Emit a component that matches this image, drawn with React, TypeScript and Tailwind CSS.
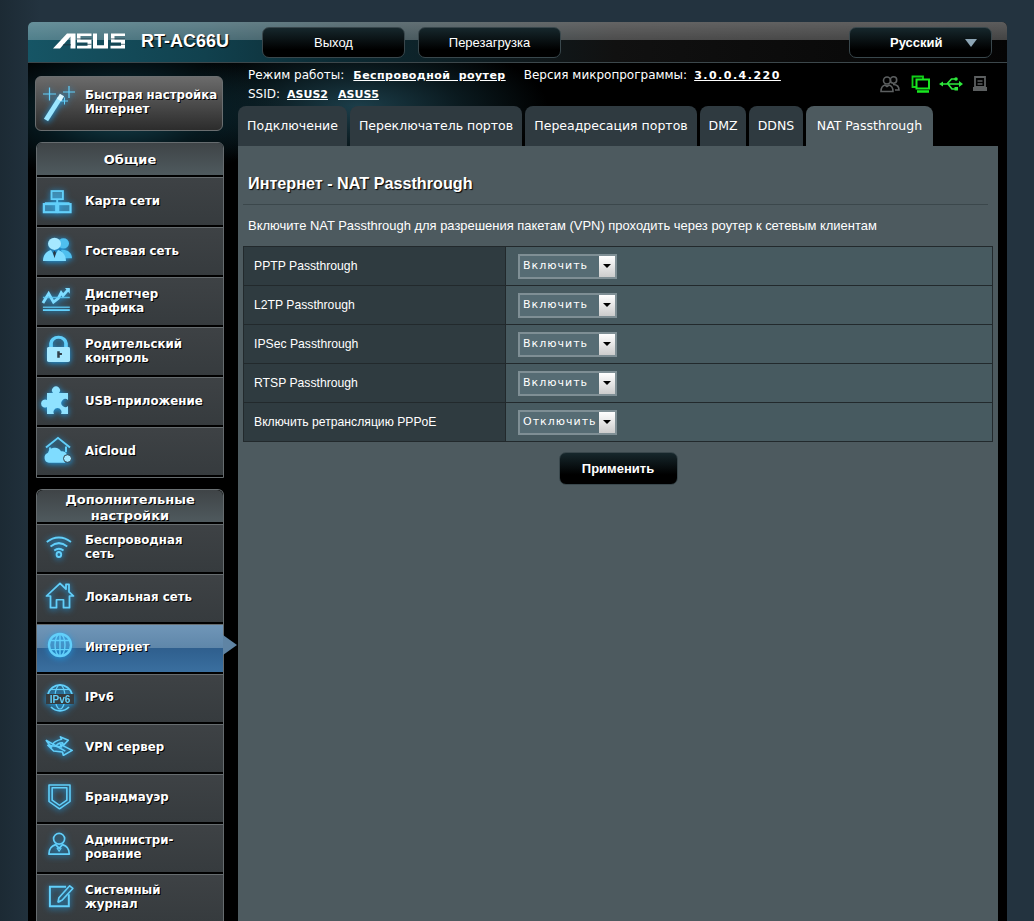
import React from "react";

const glow = "text-[#62cffa] drop-shadow-[0_1px_3px_#1aa0ee]";

function Svg({ children, t }: { children: React.ReactNode; t: string }) {
  return (
    <svg viewBox="0 0 32 32" className={`w-[32px] h-[32px] shrink-0 overflow-visible ${glow}`} fill="none" stroke="currentColor" strokeWidth="2">
      <g transform={t}>{children}</g>
    </svg>
  );
}

const NetworkIcon = () => (
  <Svg t="translate(-2 1) scale(.95 .9)">
    <rect x="10" y="4.500" width="12" height="9" strokeWidth="2" fill="#62cffa" fillOpacity=".35" />
    <path d="M16 13.500v4M3 18h26" />
    <rect x="2" y="19" width="13" height="9" strokeWidth="2.400" fill="#62cffa" fillOpacity=".25" />
    <rect x="17" y="19" width="13" height="9" strokeWidth="2.400" fill="#62cffa" fillOpacity=".25" />
  </Svg>
);
const GuestIcon = () => (
  <Svg t="translate(-2 -1) scale(1 .93)">
    <g fill="#7fdcff" stroke="none">
      <circle cx="21.500" cy="9" r="5.500" fill="#4fbfee" />
      <path d="M19 16c6-1 11 3 11 9h-8z" fill="#4fbfee" />
      <circle cx="12.500" cy="9.500" r="6.500" fill="#a6e8ff" />
      <path d="M1 28c0-7 4-11 8-12l3.500 7 3.500-7c4 1 8 5 8 12z" />
    </g>
    <path d="M12.500 17l-1.500 2 1.500 6 1.500-6z" fill="#2a3a45" stroke="none" />
  </Svg>
);
const TrafficIcon = () => (
  <Svg t="translate(-3 -2.700) scale(.96 .94)">
    <path d="M2 21l6-10 5 9 5-4 3-6 2 3 6-7" strokeWidth="3" stroke="#7fdcff" />
    <path d="M25 5h5v6z" fill="#7fdcff" stroke="none" />
    <path d="M2 15h28M2 25.500h28" strokeWidth="1.600" strokeOpacity=".8" />
    <path d="M2 28.500h28" strokeWidth="2" />
  </Svg>
);
const LockIcon = () => (
  <Svg t="translate(-3.900 -1) scale(1.150 .93)">
    <path d="M9.500 14V9a6.500 6.500 0 0 1 13 0v5" strokeWidth="3.200" />
    <rect x="6" y="13" width="20" height="16" rx="1.500" fill="#a6e8ff" stroke="none" />
    <path d="M16 17.500v7M16 20.500h3" stroke="#32404a" strokeWidth="2.200" />
  </Svg>
);
const PuzzleIcon = () => (
  <Svg t="translate(-4 -2)">
    <path
      d="M7 9h6a4 4 0 1 1 6 0h9v7a4 4 0 1 0 0 6v8h-7a4 4 0 1 0-7 0H7v-7a4 4 0 1 1 0-7z"
      fill="#8fe2ff"
      stroke="none"
    />
  </Svg>
);
const CloudIcon = () => (
  <Svg t="translate(-2 -1) scale(1 .96)">
    <path d="M4 13L16 3l12 10" strokeWidth="2" />
    <path d="M8 13v4M24 12v6" strokeWidth="2" />
    <path d="M7 29a5.500 5.500 0 0 1-1-10.500 7 7 0 0 1 13-1.500 5 5 0 0 1 6 4l-2 8z" fill="#7fdcff" stroke="none" />
    <circle cx="25.500" cy="24.500" r="4" fill="#a6e8ff" stroke="#32404a" strokeWidth="1" />
  </Svg>
);
const WifiIcon = () => (
  <Svg t="translate(0 -4) scale(.93 1)">
    <path d="M3 13c8-6 18-6 26 0" />
    <path d="M7 17.500c6-4.500 12-4.500 18 0" />
    <path d="M11 21.500c3.500-2.500 6.500-2.500 10 0" />
    <circle cx="16" cy="25.500" r="2.500" />
  </Svg>
);
const HomeIcon = () => (
  <Svg t="translate(0 -2.800) scale(1 .93)">
    <path d="M2.500 17L16 3.500l6 6V4.500h3v8l4.500 4.500h-4V29.500h-6V21h-7v8.500h-6V17z" strokeWidth="1.800" strokeLinejoin="round" />
  </Svg>
);
const GlobeIcon = () => (
  <Svg t="translate(0 -3)">
    <circle cx="16" cy="15" r="11" strokeWidth="2.400" />
    <ellipse cx="16" cy="15" rx="5" ry="11" strokeWidth="1.400" />
    <path d="M16 4v22M5 10.500h22M5 19.500h22" strokeWidth="1.400" />
  </Svg>
);
const Ipv6Icon = () => (
  <Svg t="translate(0 -2)">
    <path d="M4 13a12.500 12.500 0 0 1 24 0M7 26a12.500 12.500 0 0 0 18 0" strokeWidth="1.800" />
    <ellipse cx="16" cy="16" rx="5" ry="12" strokeWidth="1.200" />
    <path d="M6 8.500h20" strokeWidth="1.200" />
    <rect x="2" y="13" width="28" height="10" fill="#363c3f" stroke="none" />
    <text x="16" y="22" textAnchor="middle" fontSize="10" fontFamily="Liberation Sans, sans-serif" fontWeight="700" fill="currentColor" stroke="none">
      IPv6
    </text>
  </Svg>
);
const VpnIcon = () => (
  <Svg t="translate(0 -1.200) scale(.97 .84)">
    <path d="M2 10l20 13M2 10l6 9" strokeWidth="1.800" />
    <path d="M9 15c1-3 5-5 9-6l-1-3 8 4-5 6-1-3c-3 0-6 2-7 5" strokeWidth="1.800" strokeLinejoin="round" />
    <path d="M4 16l14 2-1-3 12 7-9 6-1-4-9-1z" strokeWidth="1.800" strokeLinejoin="round" />
  </Svg>
);
const ShieldIcon = () => (
  <Svg t="translate(-1.300 -.8) scale(1.050 .92)">
    <path d="M6 3h20v18l-10 8-10-8z" strokeWidth="1.500" strokeLinejoin="round" />
    <path d="M9 6h14v13.500l-7 5.500-7-5.500z" strokeWidth="1.500" strokeLinejoin="round" />
  </Svg>
);
const AdminIcon = () => (
  <Svg t="translate(1.500 -2.500) scale(.85 .83)">
    <circle cx="16" cy="10" r="6.500" strokeWidth="2" />
    <path d="M4 28.500c0-7 3-10 8-11.500l4 4.500 4-4.500c5 1.500 8 4.500 8 11.500z" strokeWidth="2" strokeLinejoin="round" />
    <path d="M13.500 21l2.500 4 2.500-4" strokeWidth="1.400" />
  </Svg>
);
const LogIcon = () => (
  <Svg t="translate(2.300 -1.400) scale(.9 .85)">
    <path d="M25 15v14H4V6h18" strokeWidth="2.200" />
    <path d="M13 24l1-5L26 5l3.500 3-12 14z" strokeWidth="1.800" strokeLinejoin="round" />
    <path d="M13 24l3-1" strokeWidth="1.800" />
  </Svg>
);
const WandIcon = () => (
  <svg viewBox="0 0 36 40" className={`w-[36px] h-[40px] ${glow}`} fill="none" stroke="currentColor">
    <path d="M2 10h13M8.500 3.500v13" strokeWidth="1.200" />
    <path d="M22 8h12M28 2v12" strokeWidth="1.200" />
    <path d="M20 17h7M23.500 13.500v7" strokeWidth="1" />
    <path d="M5 36L19 14" strokeWidth="5" stroke="#9be6ff" />
    <path d="M18 16l3-5" strokeWidth="5" stroke="#d8f6ff" />
  </svg>
);

const LogoAsus = () => (
  <svg viewBox="0 0 72 16" className="w-[72px] h-[16px]" fill="#fff">
    <path d="M0 15.500L14 .5h8.500V15.500h-5V3.500L7 15.500z" />
    <path d="M11 11h6.500v1.500H9.500z" fill="#1c3d49" />
    <path d="M24 .5h14.500v2.600H27.500V6.500h11v9H24v-2.800h10.500V9.500H24z" />
    <path d="M24 5.200h14.500v1.200H24zM24 10.800h14.500V12H24z" fill="#1c3d49" opacity=".55" />
    <path d="M40 .5h4v11.800h7V.5h4v15H40z" />
    <path d="M58 .5h14v2.600H61.500V6.500H72v9H57.500v-2.800H68V9.500H58z" />
    <path d="M58 5.200h14v1.200H58zM58 10.800h14V12H58z" fill="#1c3d49" opacity=".55" />
  </svg>
);

const GuestStatus = () => (
  <svg viewBox="0 0 20 18" className="w-[20px] h-[18px]" fill="none" stroke="#5c5f60" strokeWidth="1.600">
    <circle cx="13.500" cy="5" r="3.200" />
    <circle cx="7" cy="5.500" r="3.500" />
    <path d="M1 16.500c0-4 2-6 4-6.500l2 1.500 2-1.500c2 .5 4 2.500 4 6.500z" />
    <path d="M13 9.500c3 0 6 1.500 6 5.500h-4" />
  </svg>
);
const WanStatus = () => (
  <svg viewBox="0 0 20 18" className="w-[20px] h-[18px]" fill="none" stroke="#11d018" strokeWidth="1.800">
    <path d="M5 12H1.500V1.500H12V4" />
    <rect x="5.500" y="4.500" width="12.500" height="9" strokeWidth="2" stroke="#18e820" />
    <path d="M6 16.500h12" strokeWidth="2.400" stroke="#18e820" />
  </svg>
);
const UsbStatus = () => (
  <svg viewBox="0 0 24 16" className="w-[24px] h-[16px]" fill="none" stroke="#2ee83c" strokeWidth="1.700">
    <path d="M2 8h19M8 8l4.500-5H16M9 8l4 5h3" />
    <path d="M0 8l4-2.500v5zM24 8l-4-3v6z" fill="#2ee83c" stroke="none" />
    <circle cx="17" cy="3" r="1.800" fill="#2ee83c" stroke="none" />
    <rect x="15.500" y="11" width="3.500" height="3.500" fill="#2ee83c" stroke="none" />
  </svg>
);
const PrinterStatus = () => (
  <svg viewBox="0 0 16 16" className="w-[16px] h-[16px]" fill="none" stroke="#5c5f60" strokeWidth="1.800">
    <path d="M3 1h10v10H3z" />
    <path d="M5.500 5h5M5.500 8h5" strokeWidth="1.300" />
    <path d="M1 11h14v4H1z" fill="#5c5f60" stroke="none" />
  </svg>
);

const general: [string[], React.ReactNode][] = [
  [["Карта сети"], <NetworkIcon />],
  [["Гостевая сеть"], <GuestIcon />],
  [["Диспетчер", "трафика"], <TrafficIcon />],
  [["Родительский", "контроль"], <LockIcon />],
  [["USB-приложение"], <PuzzleIcon />],
  [["AiCloud"], <CloudIcon />],
];
const advanced: [string[], React.ReactNode, boolean?][] = [
  [["Беспроводная", "сеть"], <WifiIcon />],
  [["Локальная сеть"], <HomeIcon />],
  [["Интернет"], <GlobeIcon />, true],
  [["IPv6"], <Ipv6Icon />],
  [["VPN сервер"], <VpnIcon />],
  [["Брандмауэр"], <ShieldIcon />],
  [["Администри-", "рование"], <AdminIcon />],
  [["Системный", "журнал"], <LogIcon />],
];

const menuFace =
  "[font-family:DejaVu_Sans,sans-serif] font-bold text-white [text-shadow:1px_1px_0_#000]";
const menuText = `${menuFace} text-[11.8px] leading-[14px]`;
const groupTitle = `${menuFace} text-[13px] leading-[16px]`;

function MenuItem({ lines, icon, active, first }: { lines: string[]; icon: React.ReactNode; active?: boolean; first?: boolean }) {
  return (
    <div
      className={`relative h-[50px] shrink-0 flex items-center pl-[7px] border-b-2 border-b-black border-t border-t-[#666c6f] ${
        active
          ? "bg-[linear-gradient(to_bottom,#7096b8_0%,#5f87aa_48%,#2f5f8e_50%,#3a6f9f_100%)]"
          : "bg-[linear-gradient(to_bottom,#3e4245,#363b3e)]"
      }`}
    >
      {icon}
      <div className={`ml-[9px] ${first ? "-mt-[1px]" : "-mt-[3px]"} ${menuText}`}>
        {lines.map((l) => (
          <div key={l}>{l}</div>
        ))}
      </div>
      {active && (
        <div className="absolute left-[186px] top-[10px] w-0 h-0 border-y-[10px] border-y-transparent border-l-[14px] border-l-[#5f84a4]" />
      )}
    </div>
  );
}

function HeaderButton({ label }: { label: string }) {
  return (
    <div className="w-[143px] h-[31px] pt-[1px] rounded-[7px] border border-[#39474c] bg-[linear-gradient(to_bottom,#16272c,#000_75%)] flex items-center justify-center text-white text-[13px] [font-family:Liberation_Sans,sans-serif]">
      {label}
    </div>
  );
}

const tabs: [string, string][] = [
  ["Подключение", "w-[109px]"],
  ["Переключатель портов", "w-[172px]"],
  ["Переадресация портов", "w-[172px]"],
  ["DMZ", "w-[46px]"],
  ["DDNS", "w-[54px]"],
  ["NAT Passthrough", "w-[127px]"],
];
const rows = [
  ["PPTP Passthrough", "Включить"],
  ["L2TP Passthrough", "Включить"],
  ["IPSec Passthrough", "Включить"],
  ["RTSP Passthrough", "Включить"],
  ["Включить ретрансляцию PPPoE", "Отключить"],
];

const valueText = "[font-family:DejaVu_Sans,sans-serif] font-bold text-[11px] underline text-white";

export default function App() {
  return (
    <div className="h-[921px] overflow-hidden pt-[22px] pl-[28px] bg-[linear-gradient(to_right,#1c2a34,#23333f_40px,#23333f)]">
      <div className="w-[979px] h-[899px] rounded-t-[5px] overflow-hidden bg-black bg-[radial-gradient(ellipse_160px_70px_at_95px_90px,#164552_0%,rgba(10,40,50,0.6)_55%,transparent_100%),radial-gradient(ellipse_190px_70px_at_330px_85px,#1c3e4a_0%,rgba(20,50,60,0.5)_55%,transparent_100%)]">
        {/* Top bar */}
        <div className="relative h-[41px] border-b border-b-[#3c474b] flex items-center bg-[linear-gradient(to_bottom,rgba(255,255,255,0.35)_0%,rgba(255,255,255,0.25)_44%,transparent_44%),linear-gradient(to_right,#165565_0%,#11414e_18%,#0c2a33_32%,#111_60%,#050505_100%)]">
          <div className="ml-[25px] w-[72px] flex -mt-[2px]">
            <LogoAsus />
          </div>
          <div className="ml-[16px] w-[105px] -mt-[1px] text-white font-bold text-[18px] [font-family:Liberation_Sans,sans-serif] [text-shadow:1px_1px_1px_#000]">
            RT-AC66U
          </div>
          <div className="ml-[16px]">
            <HeaderButton label="Выход" />
          </div>
          <div className="ml-[13px]">
            <HeaderButton label="Перезагрузка" />
          </div>
          <div className="ml-[288px] relative w-[143px] h-[31px] pt-[1px] rounded-[7px] border border-[#39474c] bg-[linear-gradient(to_bottom,#16272c,#000_75%)] flex items-center pl-[40px] text-white font-bold text-[13px] [font-family:Liberation_Sans,sans-serif]">
            Русский
            <div className="absolute right-[14px] top-[11px] w-0 h-0 border-x-[6px] border-x-transparent border-t-[8px] border-t-[#8da5b5]" />
          </div>
        </div>

        <div className="flex">
          {/* Sidebar */}
          <div className="w-[210px] shrink-0 pl-[7px] pt-[13px]">
            <div className="w-[188px] h-[55px] rounded-[6px] border border-[#6a6e70] bg-[linear-gradient(to_bottom,#6b6b6b,#2c2c2c)] flex items-center pl-[5px]">
              <WandIcon />
              <div className={`ml-[8px] -mt-[4px] ${menuText}`}>
                <div>Быстрая настройка</div>
                <div>Интернет</div>
              </div>
            </div>

            <div className="ml-[1px] mt-[11px] w-[188px] border border-[#666c6f] rounded-t-[6px] overflow-hidden">
              <div className={`h-[34px] pt-[2px] flex items-center justify-center border-b-2 border-b-black bg-[linear-gradient(to_bottom,#3f4447,#4f5a5e)] ${groupTitle}`}>
                Общие
              </div>
              {general.map(([l, i]) => (
                <MenuItem key={l[0]} lines={l} icon={i} first />
              ))}
            </div>

            <div className="ml-[1px] mt-[11px] w-[188px] border-x border-x-[#666c6f] border-t border-t-[#6a7073] rounded-t-[6px]">
              <div className={`h-[34px] rounded-t-[6px] flex flex-col items-center justify-center border-b-2 border-b-black text-center bg-[linear-gradient(to_bottom,#3f4447,#4f5a5e)] ${groupTitle}`}>
                <div className="translate-y-[2px]">Дополнительные</div>
                <div className="translate-y-[2px]">настройки</div>
              </div>
              {advanced.map(([l, i, a]) => (
                <MenuItem key={l[0]} lines={l} icon={i} active={a} />
              ))}
            </div>
          </div>

          {/* Main */}
          <div className="w-[760px] shrink-0">
            <div className="h-[43px] relative pl-[10px] pt-[3px] text-white text-[12px] leading-[19px] [font-family:DejaVu_Sans,sans-serif]">
              <div className="flex items-baseline">
                <span>Режим работы:</span>
                <span className={`${valueText} ml-[9px] tracking-[0.45px] [word-spacing:4px]`}>Беспроводной роутер</span>
                <span className="ml-[18px]">Версия микропрограммы:</span>
                <span className={`${valueText} ml-[7px] tracking-[1.5px]`}>3.0.0.4.220</span>
              </div>
              <div className="flex items-baseline">
                <span>SSID:</span>
                <span className={`${valueText} ml-[7px]`}>ASUS2</span>
                <span className={`${valueText} ml-[10px]`}>ASUS5</span>
              </div>
              <div className="absolute left-[642px] top-[12px] flex items-center">
                <GuestStatus />
                <div className="ml-[11px]"><WanStatus /></div>
                <div className="ml-[8px]"><UsbStatus /></div>
                <div className="ml-[9px]"><PrinterStatus /></div>
              </div>
            </div>

            <div className="flex gap-[3px] h-[40px]">
              {tabs.map(([t, w], i) => (
                <div
                  key={t}
                  className={`h-[40px] ${w} rounded-t-[8px] flex items-center justify-center whitespace-nowrap text-[12.5px] text-white [font-family:DejaVu_Sans,sans-serif] ${
                    i === 5 ? "bg-[#4d5a5f]" : "bg-[#2f3a40]"
                  }`}
                >
                  {t}
                </div>
              ))}
            </div>

            <div className="h-[775px] bg-[#4d5a5f] px-[5px] [font-family:Liberation_Sans,sans-serif] text-white">
              <h1 className="pl-[5px] pr-[5px] pt-[28px] h-[59px] border-b border-b-[#3b474b] mr-[5px] text-[16.2px] font-bold leading-[18px] [text-shadow:1px_1px_1px_#000]">
                Интернет - NAT Passthrough
              </h1>
              <p className="pl-[5px] pt-[13px] text-[12.95px] leading-[16px] h-[41px]">
                Включите NAT Passthrough для разрешения пакетам (VPN) проходить через роутер к сетевым клиентам
              </p>
              <div className="w-[750px] border border-[#22292c] border-b-0">
                {rows.map(([label, val]) => (
                  <div key={label} className="flex h-[39px] border-b border-b-[#22292c]">
                    <div className="w-[262px] bg-[#2f3b40] border-r border-r-[#22292c] flex items-center pl-[10px] text-[12.2px]">
                      {label}
                    </div>
                    <div className="flex-1 bg-[#475a60] flex items-center pl-[12px]">
                      <div className="w-[99px] h-[25px] border-2 border-[#7f8f95] bg-[#566c74] flex items-center justify-between">
                        <span className="flex-1 pl-[3px] text-[11px] tracking-[1px] [font-family:DejaVu_Sans,sans-serif] whitespace-nowrap">
                          {val}
                        </span>
                        <span className="w-[16px] h-[21px] bg-[linear-gradient(to_bottom,#fff,#ccc)] flex items-center justify-center shrink-0">
                          <span className="w-0 h-0 border-x-[4px] border-x-transparent border-t-[4px] border-t-black" />
                        </span>
                      </div>
                    </div>
                  </div>
                ))}
              </div>
              <div className="flex justify-center mt-[10px]">
                <div className="w-[119px] h-[33px] rounded-[7px] border border-[#39474c] bg-[linear-gradient(to_bottom,#16272c,#000_70%)] flex items-center justify-center font-bold text-[13px]">
                  Применить
                </div>
              </div>
            </div>
          </div>
        </div>
      </div>
    </div>
  );
}
